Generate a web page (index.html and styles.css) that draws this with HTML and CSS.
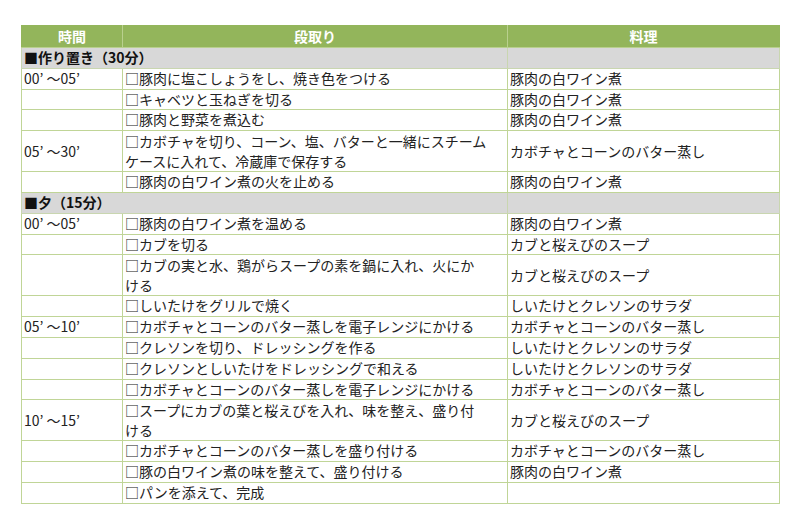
FILE: index.html
```html
<!DOCTYPE html>
<html lang="ja">
<head>
<meta charset="utf-8">
<title>段取り表</title>
<link rel="stylesheet" href="styles.css">
</head>
<body>
<table class="plan">
  <colgroup>
    <col class="c-time">
    <col class="c-step">
    <col class="c-dish">
  </colgroup>
  <thead>
    <tr class="head">
      <th>時間</th>
      <th>段取り</th>
      <th>料理</th>
    </tr>
  </thead>
  <tbody>
    <tr class="sec"><td colspan="2">■作り置き（30分）</td><td></td></tr>
    <tr><td class="time">00’ ～05’</td><td>□豚肉に塩こしょうをし、焼き色をつける</td><td>豚肉の白ワイン煮</td></tr>
    <tr><td></td><td>□キャベツと玉ねぎを切る</td><td>豚肉の白ワイン煮</td></tr>
    <tr><td></td><td>□豚肉と野菜を煮込む</td><td>豚肉の白ワイン煮</td></tr>
    <tr class="dbl"><td class="time">05’ ～30’</td><td>□カボチャを切り、コーン、塩、バターと一緒にスチーム<br>ケースに入れて、冷蔵庫で保存する</td><td>カボチャとコーンのバター蒸し</td></tr>
    <tr><td></td><td>□豚肉の白ワイン煮の火を止める</td><td>豚肉の白ワイン煮</td></tr>
    <tr class="sec"><td colspan="2">■夕（15分）</td><td></td></tr>
    <tr><td class="time">00’ ～05’</td><td>□豚肉の白ワイン煮を温める</td><td>豚肉の白ワイン煮</td></tr>
    <tr><td></td><td>□カブを切る</td><td>カブと桜えびのスープ</td></tr>
    <tr class="dbl"><td></td><td>□カブの実と水、鶏がらスープの素を鍋に入れ、火にか<br>ける</td><td>カブと桜えびのスープ</td></tr>
    <tr><td></td><td>□しいたけをグリルで焼く</td><td>しいたけとクレソンのサラダ</td></tr>
    <tr><td class="time">05’ ～10’</td><td>□カボチャとコーンのバター蒸しを電子レンジにかける</td><td>カボチャとコーンのバター蒸し</td></tr>
    <tr><td></td><td>□クレソンを切り、ドレッシングを作る</td><td>しいたけとクレソンのサラダ</td></tr>
    <tr><td></td><td>□クレソンとしいたけをドレッシングで和える</td><td>しいたけとクレソンのサラダ</td></tr>
    <tr><td></td><td>□カボチャとコーンのバター蒸しを電子レンジにかける</td><td>カボチャとコーンのバター蒸し</td></tr>
    <tr class="dbl"><td class="time">10’ ～15’</td><td>□スープにカブの葉と桜えびを入れ、味を整え、盛り付<br>ける</td><td>カブと桜えびのスープ</td></tr>
    <tr><td></td><td>□カボチャとコーンのバター蒸しを盛り付ける</td><td>カボチャとコーンのバター蒸し</td></tr>
    <tr><td></td><td>□豚の白ワイン煮の味を整えて、盛り付ける</td><td>豚肉の白ワイン煮</td></tr>
    <tr><td></td><td>□パンを添えて、完成</td><td></td></tr>
  </tbody>
</table>
</body>
</html>
```

FILE: styles.css
```css
html, body {
  margin: 0;
  padding: 0;
  background: #ffffff;
}

body {
  padding: 25px 0 0 21px;
  font-family: "Noto Sans CJK JP", "Noto Sans", sans-serif;
  font-size: 14px;
  color: #222222;
}

.plan {
  border-collapse: collapse;
  table-layout: fixed;
  width: 758px;
  border: 1px solid #c0d597;
}

.c-time { width: 101px; }
.c-step { width: 385px; }
.c-dish { width: 272px; }

.plan th,
.plan td {
  border: 1px solid #c0d597;
  padding: 0 2px;
  line-height: 19.8px;
  height: 19.8px;
  text-align: left;
  vertical-align: middle;
  white-space: nowrap;
  overflow: visible;
}

.head th {
  background: #93b55b;
  color: #ffffff;
  font-weight: bold;
  text-align: center;
  line-height: 21px;
  height: 21px;
  border-color: #b9d08e;
  border-top-color: #93b55b;
}

.head th:first-child { border-left-color: #93b55b; }
.head th:last-child { border-right-color: #93b55b; }

.sec td {
  background: #d8d8d8;
  font-weight: bold;
  color: #111111;
  border-color: #c9d6b0;
}

.time {
  padding-left: 3px;
}

.dbl td {
  line-height: 20px;
  height: 40px;
}
```
